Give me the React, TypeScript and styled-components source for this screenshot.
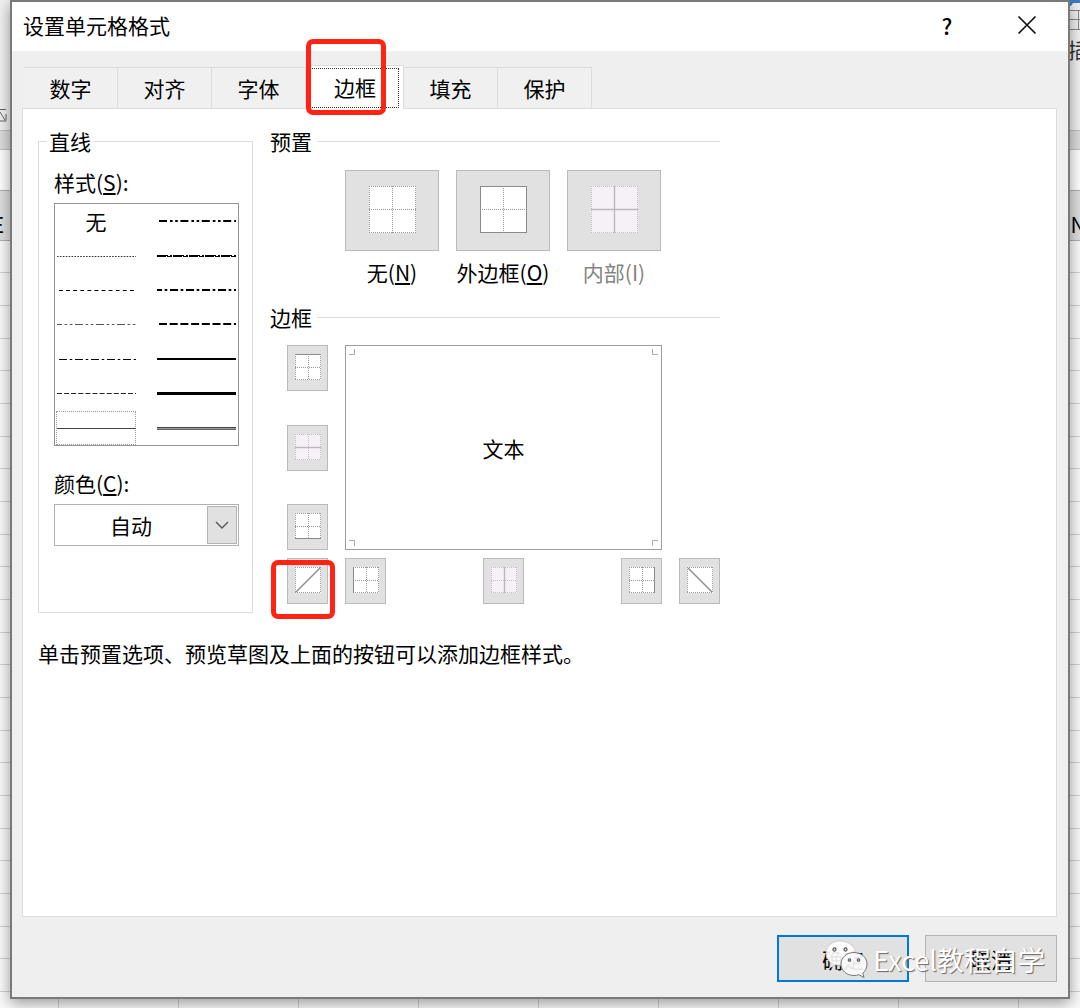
import React, { useState } from "react";
import styled, { createGlobalStyle, css } from "styled-components";

const GlobalStyle = createGlobalStyle`
  *, *::before, *::after { box-sizing: border-box; }
  body {
    margin: 0;
    background: #fafafa;
    color: #000;
    font-family: "Noto Sans CJK SC", "Open Sans", sans-serif;
    font-size: 21px;
    line-height: 30px;
  }
  button, select { font: inherit; color: inherit; margin: 0; padding: 0; border-radius: 0; }
`;

/* ---------- worksheet behind the dialog ---------- */

const Desktop = styled.div`
  position: relative;
  display: flex;
  min-height: 100vh;
  padding: 0 10px 9px;
  overflow: hidden;
`;

const Worksheet = styled.div`
  position: absolute;
  inset: 0;
  overflow: hidden;
  display: flex;
  flex-direction: column;
`;

const Ribbon = styled.div`
  display: flex;
  justify-content: space-between;
  height: 130px;
  flex: none;
  background: #f1f1f1;
`;

const LauncherSlot = styled.div`
  align-self: flex-end;
`;

const InsertGroup = styled.div`
  display: flex;
  flex-direction: column;
  width: 12px;
  overflow: hidden;
  white-space: nowrap;
  color: #333;
`;

const RibbonEdge = styled.div`
  height: 20px;
  flex: none;
  background: #dcdcdc;
  border: solid #c0c0c0;
  border-width: 1px 0;
`;

const FormulaBar = styled.div`
  height: 40px;
  flex: none;
  background: #fff;
`;

const ColumnHeads = styled.div`
  display: flex;
  flex: none;
  height: 51px;
  margin-left: -62px;
  background: #dedede;
  border: solid #b0b0b0;
  border-width: 1px 0;
`;

const ColumnHead = styled.div`
  flex: none;
  width: 120px;
  padding-top: 18px;
  text-align: center;
`;

const Cells = styled.div`
  flex: 1;
  overflow: hidden;
  margin-left: -62px;
  background: linear-gradient(to right, #d0d0d0 1px, transparent 1px) 0 0 / 120px 100%;
`;

const SheetRow = styled.div`
  height: 33px;
  border-bottom: 1px solid #d0d0d0;
  &:nth-child(3n + 1) { height: 32px; }
`;

/* ---------- dialog frame ---------- */

const Dialog = styled.section`
  position: relative;
  flex: 1;
  min-width: 0;
  display: flex;
  flex-direction: column;
  background: #efefef;
  border: 2px solid #7a7a7a;
  box-shadow: 0 4px 14px rgba(0, 0, 0, 0.4);
`;

const TitleBar = styled.header`
  display: flex;
  align-items: center;
  justify-content: space-between;
  height: 49px;
  padding: 0 21px 4px 11px;
  background: #fff;
`;

const Title = styled.h1`
  margin: 0;
  font-size: 21px;
  font-weight: 400;
`;

const TitleActions = styled.div`
  display: flex;
  gap: 40px;
`;

const TitleButton = styled.button`
  display: flex;
  align-items: center;
  justify-content: center;
  width: 40px;
  height: 40px;
  border: 0;
  background: transparent;
  font-weight: 500;
  font-size: 22px;
`;

const Body = styled.div`
  flex: 1;
  display: flex;
  flex-direction: column;
  padding: 14px 11px 15px 10px;
`;

const TabList = styled.div`
  display: flex;
  align-items: flex-end;
  padding-left: 2px;
  height: 43px;
`;

const Tab = styled.button<{ $selected: boolean }>`
  position: relative;
  flex: none;
  width: 94px;
  height: 41px;
  border: solid #dcdcdc;
  border-width: 1px 1px 0 0;
  background: #f0f0f0;
  ${(p) =>
    p.$selected &&
    css`
      width: 98px;
      height: 44px;
      padding-bottom: 2px;
      background: #fff;
      border-width: 1px 1px 0 1px;
      margin-bottom: -1px;
      z-index: 1;
    `}
`;

const TabFocus = styled.span`
  position: absolute;
  inset: 2px 4px 1px 2px;
  border: 1px dotted #333;
`;

const Mark = styled.span`
  position: absolute;
  z-index: 2;
  border: 5px solid #ff2314;
  border-radius: 7px;
  pointer-events: none;
`;

const TabMark = styled(Mark)`
  inset: -27px 17px -6px -1px;
`;

const DiagonalMark = styled(Mark)`
  inset: 1px -8px -16px -17px;
`;

const Panel = styled.div`
  flex: 1;
  padding: 17px 15px;
  background: #fff;
  border: 1px solid #dcdcdc;
`;

const Columns = styled.div`
  display: grid;
  grid-template-columns: 215px 450px;
  gap: 17px;
`;

const Group = styled.fieldset<{ $framed?: boolean }>`
  min-width: 0;
  margin: 0;
  padding: 0;
  border: solid #dcdcdc;
  border-width: ${(p) => (p.$framed ? "1px" : "1px 0 0")};
`;

const Legend = styled.legend<{ $inset?: boolean }>`
  margin-left: ${(p) => (p.$inset ? "8px" : "0")};
  padding: 0 ${(p) => (p.$inset ? "2px" : "5px")} 0 ${(p) => (p.$inset ? "2px" : "0")};
`;

/* ---------- line group ---------- */

const LineFields = styled.div`
  display: flex;
  flex-direction: column;
  padding: 11px 13px 66px 15px;
`;

const FieldLabel = styled.label`
  display: block;
  height: 36px;
`;

const StyleList = styled.div`
  display: grid;
  grid-template: repeat(7, 1fr) / 80px 80px;
  column-gap: 20px;
  height: 243px;
  margin-bottom: 22px;
  padding: 0 1px;
  border: 1px solid #92949c;
`;

const StyleOption = styled.button<{ $selected: boolean }>`
  display: flex;
  align-items: center;
  justify-content: center;
  border: 1px ${(p) => (p.$selected ? "dotted #999" : "solid transparent")};
  background: transparent;
`;

const ColorBox = styled.div`
  position: relative;
`;

const ColorSelect = styled.select`
  appearance: none;
  display: block;
  width: 100%;
  height: 42px;
  padding-right: 31px;
  border: 1px solid #b0b2b6;
  background: #fff;
  text-align-last: center;
`;

const ColorArrow = styled.span`
  position: absolute;
  inset: 2px 2px 2px auto;
  display: flex;
  align-items: center;
  justify-content: center;
  width: 30px;
  border: 1px solid #b4b4b4;
  background: #e1e1e1;
  pointer-events: none;
`;

/* ---------- presets and border buttons ---------- */

const RightColumn = styled.div`
  display: flex;
  flex-direction: column;
  gap: 15px;
`;

const Presets = styled.div`
  display: flex;
  gap: 17px;
  padding: 14px 0 0 75px;
`;

const Preset = styled.div`
  display: flex;
  flex-direction: column;
  align-items: center;
  gap: 6px;
  width: 94px;
  white-space: nowrap;
`;

const PresetLabel = styled.label<{ $disabled?: boolean }>`
  color: ${(p) => (p.$disabled ? "#838383" : "#000")};
`;

const IconButton = styled.button<{ $large?: boolean }>`
  position: relative;
  display: flex;
  align-items: center;
  justify-content: center;
  width: ${(p) => (p.$large ? "94px" : "41px")};
  height: ${(p) => (p.$large ? "81px" : "46px")};
  padding-bottom: 2px;
  border: 1px solid #bababa;
  background: #e1e1e1;
`;

const BorderGrid = styled.div`
  display: grid;
  grid-template-columns: 41px 1fr 41px;
  gap: 8px 17px;
  padding: 13px 0 0 17px;
`;

const SideButtons = styled.div`
  display: flex;
  flex-direction: column;
  justify-content: space-between;
`;

const BottomButtons = styled.div`
  display: flex;
  justify-content: space-between;
`;

const Preview = styled.div`
  grid-column: 2;
  display: flex;
  flex-direction: column;
  justify-content: space-between;
  height: 205px;
  padding: 3px;
  border: 1px solid #9b9ca3;
  text-align: center;
`;

const PreviewEdge = styled.div`
  display: flex;
  justify-content: space-between;
`;

const Hint = styled.p`
  margin: 0;
  padding-top: 25px;
`;

/* ---------- footer ---------- */

const Footer = styled.footer`
  position: relative;
  display: flex;
  justify-content: flex-end;
  gap: 16px;
  padding-top: 18px;
`;

const FooterButton = styled.button<{ $primary?: boolean }>`
  width: 132px;
  height: 47px;
  border: ${(p) => (p.$primary ? "2px solid #0078d7" : "1px solid #b4b4b4")};
  background: #e1e1e1;
`;

const Watermark = styled.div`
  position: absolute;
  right: 12px;
  bottom: 2px;
  display: flex;
  align-items: center;
  gap: 4px;
  color: #fff;
  font-size: 27px;
  line-height: 40px;
  text-shadow: 1px 1px 1px #666;
  pointer-events: none;
`;

/* ---------- drawings ---------- */

type Edge = "top" | "bottom" | "left" | "right" | "midH" | "midV" | "up" | "down";

function BorderIcon({ size, edges = [], faded = false }: { size: number; edges?: Edge[]; faded?: boolean }) {
  const e = size - 0.5;
  const m = Math.floor(size / 2) + 0.5;
  const segments: Record<Edge, [number, number, number, number]> = {
    top: [0, 0.5, size, 0.5],
    bottom: [0, e, size, e],
    left: [0.5, 0, 0.5, size],
    right: [e, 0, e, size],
    midH: [0, m, size, m],
    midV: [m, 0, m, size],
    up: [1, size - 1, size - 1, 1],
    down: [1, 1, size - 1, size - 1],
  };
  const diagonal = edges.includes("up") || edges.includes("down");
  const base: Edge[] = ["top", "bottom", "left", "right"];
  if (!diagonal) base.push("midH", "midV");
  return (
    <svg width={size} height={size} aria-hidden="true">
      <rect width={size} height={size} fill={faded ? "#f6f0f7" : "#fff"} />
      {base.map((k) => {
        const [x1, y1, x2, y2] = segments[k];
        const solid = edges.includes(k);
        return (
          <line
            key={k}
            x1={x1}
            y1={y1}
            x2={x2}
            y2={y2}
            stroke={faded ? (solid ? "#bdb8be" : "#c4bfc5") : solid ? "#8a8a8a" : "#999"}
            strokeWidth={solid && (k === "midV" || k === "midH") ? 1.4 : 1}
            strokeDasharray={solid ? undefined : "1 1"}
          />
        );
      })}
      {diagonal &&
        edges.map((k) => {
          const [x1, y1, x2, y2] = segments[k];
          return <line key={k} x1={x1} y1={y1} x2={x2} y2={y2} stroke="#8c8c8c" strokeWidth="1.4" />;
        })}
    </svg>
  );
}

interface Stroke {
  y: number;
  w: number;
  dash?: string;
  color?: string;
  from?: number;
}

const SampleSvg = styled.svg`
  flex: none;
`;

function LineSample({ strokes }: { strokes: Stroke[] }) {
  return (
    <SampleSvg width="79" height="6" aria-hidden="true">
      {strokes.map((s, i) => (
        <line
          key={i}
          x1={s.from ?? 0}
          x2="79"
          y1={s.y}
          y2={s.y}
          stroke={s.color ?? "#000"}
          strokeWidth={s.w}
          strokeDasharray={s.dash}
        />
      ))}
    </SampleSvg>
  );
}

function Corner({ d }: { d: string }) {
  return (
    <svg width="7" height="7" aria-hidden="true">
      <path d={d} fill="none" stroke="#aaa" />
    </svg>
  );
}

const lineStyles: { name: string; strokes?: Stroke[] }[] = [
  { name: "无" },
  { name: "粗双点划线", strokes: [{ y: 3, w: 2, from: 2, dash: "8 3 2.6 2.6 2.6 2.6" }] },
  { name: "点线", strokes: [{ y: 3.5, w: 1, dash: "1.6 1.3", color: "#333" }] },
  {
    name: "斜点划线",
    strokes: [
      { y: 2.5, w: 1, dash: "11 2 2 1" },
      { y: 3.5, w: 1, dash: "9 1 5 1" },
    ],
  },
  { name: "短虚线", strokes: [{ y: 3.5, w: 1, from: 2, dash: "3.8 3.3" }] },
  { name: "粗点划线", strokes: [{ y: 3, w: 2, dash: "5 2.7 2.6 2.7 8 2.7 2.6 2.7 8 2.7 2.6 2.7 8 2.7 2.6 2.7 8 2.7 2.6 2.7" }] },
  { name: "双点划线", strokes: [{ y: 3.5, w: 1, color: "#555", dash: "5 2.6 2.6 2.6 2.6 2.6 8 2.6 2.6 2.6 2.6 2.6 8 2.6 2.6 2.6 2.6 2.6 8 2.6 2.6 2.6 2.6 2.6" }] },
  { name: "粗虚线", strokes: [{ y: 3, w: 2, from: 2, dash: "8 2.7" }] },
  { name: "点划线", strokes: [{ y: 3.5, w: 1, from: 2, dash: "8 2.7 2.6 2.7" }] },
  { name: "中实线", strokes: [{ y: 3, w: 2 }] },
  { name: "虚线", strokes: [{ y: 3.5, w: 1, color: "#222", dash: "5 2.1" }] },
  { name: "粗实线", strokes: [{ y: 3.5, w: 3 }] },
  { name: "细实线", strokes: [{ y: 3.5, w: 1, color: "#444" }] },
  {
    name: "双线",
    strokes: [
      { y: 2.5, w: 1, color: "#444" },
      { y: 3.5, w: 1, color: "#999" },
      { y: 4.5, w: 1, color: "#666" },
    ],
  },
];

const tabs = ["数字", "对齐", "字体", "边框", "填充", "保护"];
const heads = ["E", "", "", "", "", "", "", "", "", "N"];

export default function App() {
  const [tab, setTab] = useState("边框");
  const [line, setLine] = useState("细实线");

  return (
    <>
      <GlobalStyle />
      <Desktop>
        <Worksheet aria-hidden="true">
          <Ribbon>
            <LauncherSlot>
              <svg width="7" height="16">
                <path d="M0 1.5H6M0 4L5 12M6 6V13H0" fill="none" stroke="#666" />
              </svg>
            </LauncherSlot>
            <InsertGroup>
              <svg width="12" height="34">
                <path d="M0 0H12V3H5L3 6H0Z" fill="#3d7cc0" />
                <path d="M0 10.5H12M0 19.5H12M0 29.5H12M10.5 10V30" fill="none" stroke="#888" />
              </svg>
              插
            </InsertGroup>
          </Ribbon>
          <RibbonEdge />
          <FormulaBar />
          <ColumnHeads>
            {heads.map((h, i) => (
              <ColumnHead key={i}>{h}</ColumnHead>
            ))}
          </ColumnHeads>
          <Cells>
            {Array.from({ length: 24 }, (_, i) => (
              <SheetRow key={i} />
            ))}
          </Cells>
        </Worksheet>

        <Dialog role="dialog" aria-labelledby="dialog-title">
          <TitleBar>
            <Title id="dialog-title">设置单元格格式</Title>
            <TitleActions>
              <TitleButton type="button">?</TitleButton>
              <TitleButton type="button" aria-label="关闭">
                <svg width="20" height="20" aria-hidden="true">
                  <path d="M1.5 1.5L18.5 18.5M18.5 1.5L1.5 18.5" stroke="#111" strokeWidth="1.7" />
                </svg>
              </TitleButton>
            </TitleActions>
          </TitleBar>

          <Body>
            <TabList role="tablist">
              {tabs.map((t) => (
                <Tab key={t} type="button" role="tab" aria-selected={t === tab} $selected={t === tab} onClick={() => setTab(t)}>
                  {t}
                  {t === tab && <TabFocus />}
                  {t === "边框" && <TabMark />}
                </Tab>
              ))}
            </TabList>

            <Panel role="tabpanel">
              <Columns>
                <Group $framed>
                  <Legend $inset>直线</Legend>
                  <LineFields>
                    <FieldLabel as="span" id="style-label">
                      样式(<u>S</u>):
                    </FieldLabel>
                    <StyleList role="group" aria-labelledby="style-label">
                      {lineStyles.map((s) => (
                        <StyleOption
                          key={s.name}
                          type="button"
                          aria-label={s.name}
                          aria-pressed={s.name === line}
                          $selected={s.name === line}
                          onClick={() => setLine(s.name)}
                        >
                          {s.strokes ? <LineSample strokes={s.strokes} /> : s.name}
                        </StyleOption>
                      ))}
                    </StyleList>
                    <FieldLabel htmlFor="color">
                      颜色(<u>C</u>):
                    </FieldLabel>
                    <ColorBox>
                      <ColorSelect id="color">
                        <option>自动</option>
                      </ColorSelect>
                      <ColorArrow>
                        <svg width="14" height="9" aria-hidden="true">
                          <path d="M1 1L7 7L13 1" fill="none" stroke="#555" strokeWidth="1.4" />
                        </svg>
                      </ColorArrow>
                    </ColorBox>
                  </LineFields>
                </Group>

                <RightColumn>
                  <Group>
                    <Legend>预置</Legend>
                    <Presets>
                      <Preset>
                        <IconButton id="preset-none" type="button" $large>
                          <BorderIcon size={47} />
                        </IconButton>
                        <PresetLabel htmlFor="preset-none">
                          无(<u>N</u>)
                        </PresetLabel>
                      </Preset>
                      <Preset>
                        <IconButton id="preset-outline" type="button" $large>
                          <BorderIcon size={47} edges={["top", "bottom", "left", "right"]} />
                        </IconButton>
                        <PresetLabel htmlFor="preset-outline">
                          外边框(<u>O</u>)
                        </PresetLabel>
                      </Preset>
                      <Preset>
                        <IconButton id="preset-inside" type="button" $large disabled>
                          <BorderIcon size={47} edges={["midH", "midV"]} faded />
                        </IconButton>
                        <PresetLabel htmlFor="preset-inside" $disabled>
                          内部(I)
                        </PresetLabel>
                      </Preset>
                    </Presets>
                  </Group>

                  <Group>
                    <Legend>边框</Legend>
                    <BorderGrid>
                      <SideButtons>
                        <IconButton type="button" aria-label="上边框">
                          <BorderIcon size={26} edges={["top"]} />
                        </IconButton>
                        <IconButton type="button" aria-label="水平内边框" disabled>
                          <BorderIcon size={26} edges={["midH"]} faded />
                        </IconButton>
                        <IconButton type="button" aria-label="下边框">
                          <BorderIcon size={26} edges={["bottom"]} />
                        </IconButton>
                      </SideButtons>
                      <Preview>
                        <PreviewEdge>
                          <Corner d="M0 5.5H5.5V0" />
                          <Corner d="M1.5 0V5.5H7" />
                        </PreviewEdge>
                        文本
                        <PreviewEdge>
                          <Corner d="M0 1.5H5.5V7" />
                          <Corner d="M1.5 7V1.5H7" />
                        </PreviewEdge>
                      </Preview>
                      <span />
                      <IconButton type="button" aria-label="左斜线">
                        <BorderIcon size={26} edges={["up"]} />
                        <DiagonalMark />
                      </IconButton>
                      <BottomButtons>
                        <IconButton type="button" aria-label="左边框">
                          <BorderIcon size={26} edges={["left"]} />
                        </IconButton>
                        <IconButton type="button" aria-label="垂直内边框" disabled>
                          <BorderIcon size={26} edges={["midV"]} faded />
                        </IconButton>
                        <IconButton type="button" aria-label="右边框">
                          <BorderIcon size={26} edges={["right"]} />
                        </IconButton>
                      </BottomButtons>
                      <IconButton type="button" aria-label="右斜线">
                        <BorderIcon size={26} edges={["down"]} />
                      </IconButton>
                    </BorderGrid>
                  </Group>
                </RightColumn>
              </Columns>
              <Hint>单击预置选项、预览草图及上面的按钮可以添加边框样式。</Hint>
            </Panel>

            <Footer>
              <FooterButton type="button" $primary>
                确定
              </FooterButton>
              <FooterButton type="button">取消</FooterButton>
              <Watermark>
                <svg width="44" height="40" viewBox="0 0 44 40" aria-hidden="true">
                  <path d="M15 1C7 1 1 6.500 1 13.500c0 4 2 7 5 9.500l-1.500 5 6-3c2 .6 4 .8 6 .8 8 0 14-5.300 14-12.300S23.500 1 15 1Z" fill="#fff" fillOpacity="0.9" stroke="#bbb" strokeWidth="0.6" />
                  <path d="M29 12.500c-7.500 0-13 5-13 11.500s5.500 11.500 13 11.500c1.800 0 3.500-.3 5-.8l5 2.800-1.200-4.300C40.500 31 42 28 42 24c0-6.500-5.500-11.500-13-11.500Z" fill="#fafafa" fillOpacity="0.92" stroke="#777" strokeWidth="1" />
                  <g fill="#ddd" stroke="#555" strokeWidth="1.1">
                    <circle cx="9.500" cy="9.500" r="1.600" />
                    <circle cx="20.500" cy="9.500" r="1.600" />
                    <circle cx="24.500" cy="20" r="1.300" />
                    <circle cx="33.500" cy="20" r="1.300" />
                  </g>
                </svg>
                Excel教程自学
              </Watermark>
            </Footer>
          </Body>
        </Dialog>
      </Desktop>
    </>
  );
}
